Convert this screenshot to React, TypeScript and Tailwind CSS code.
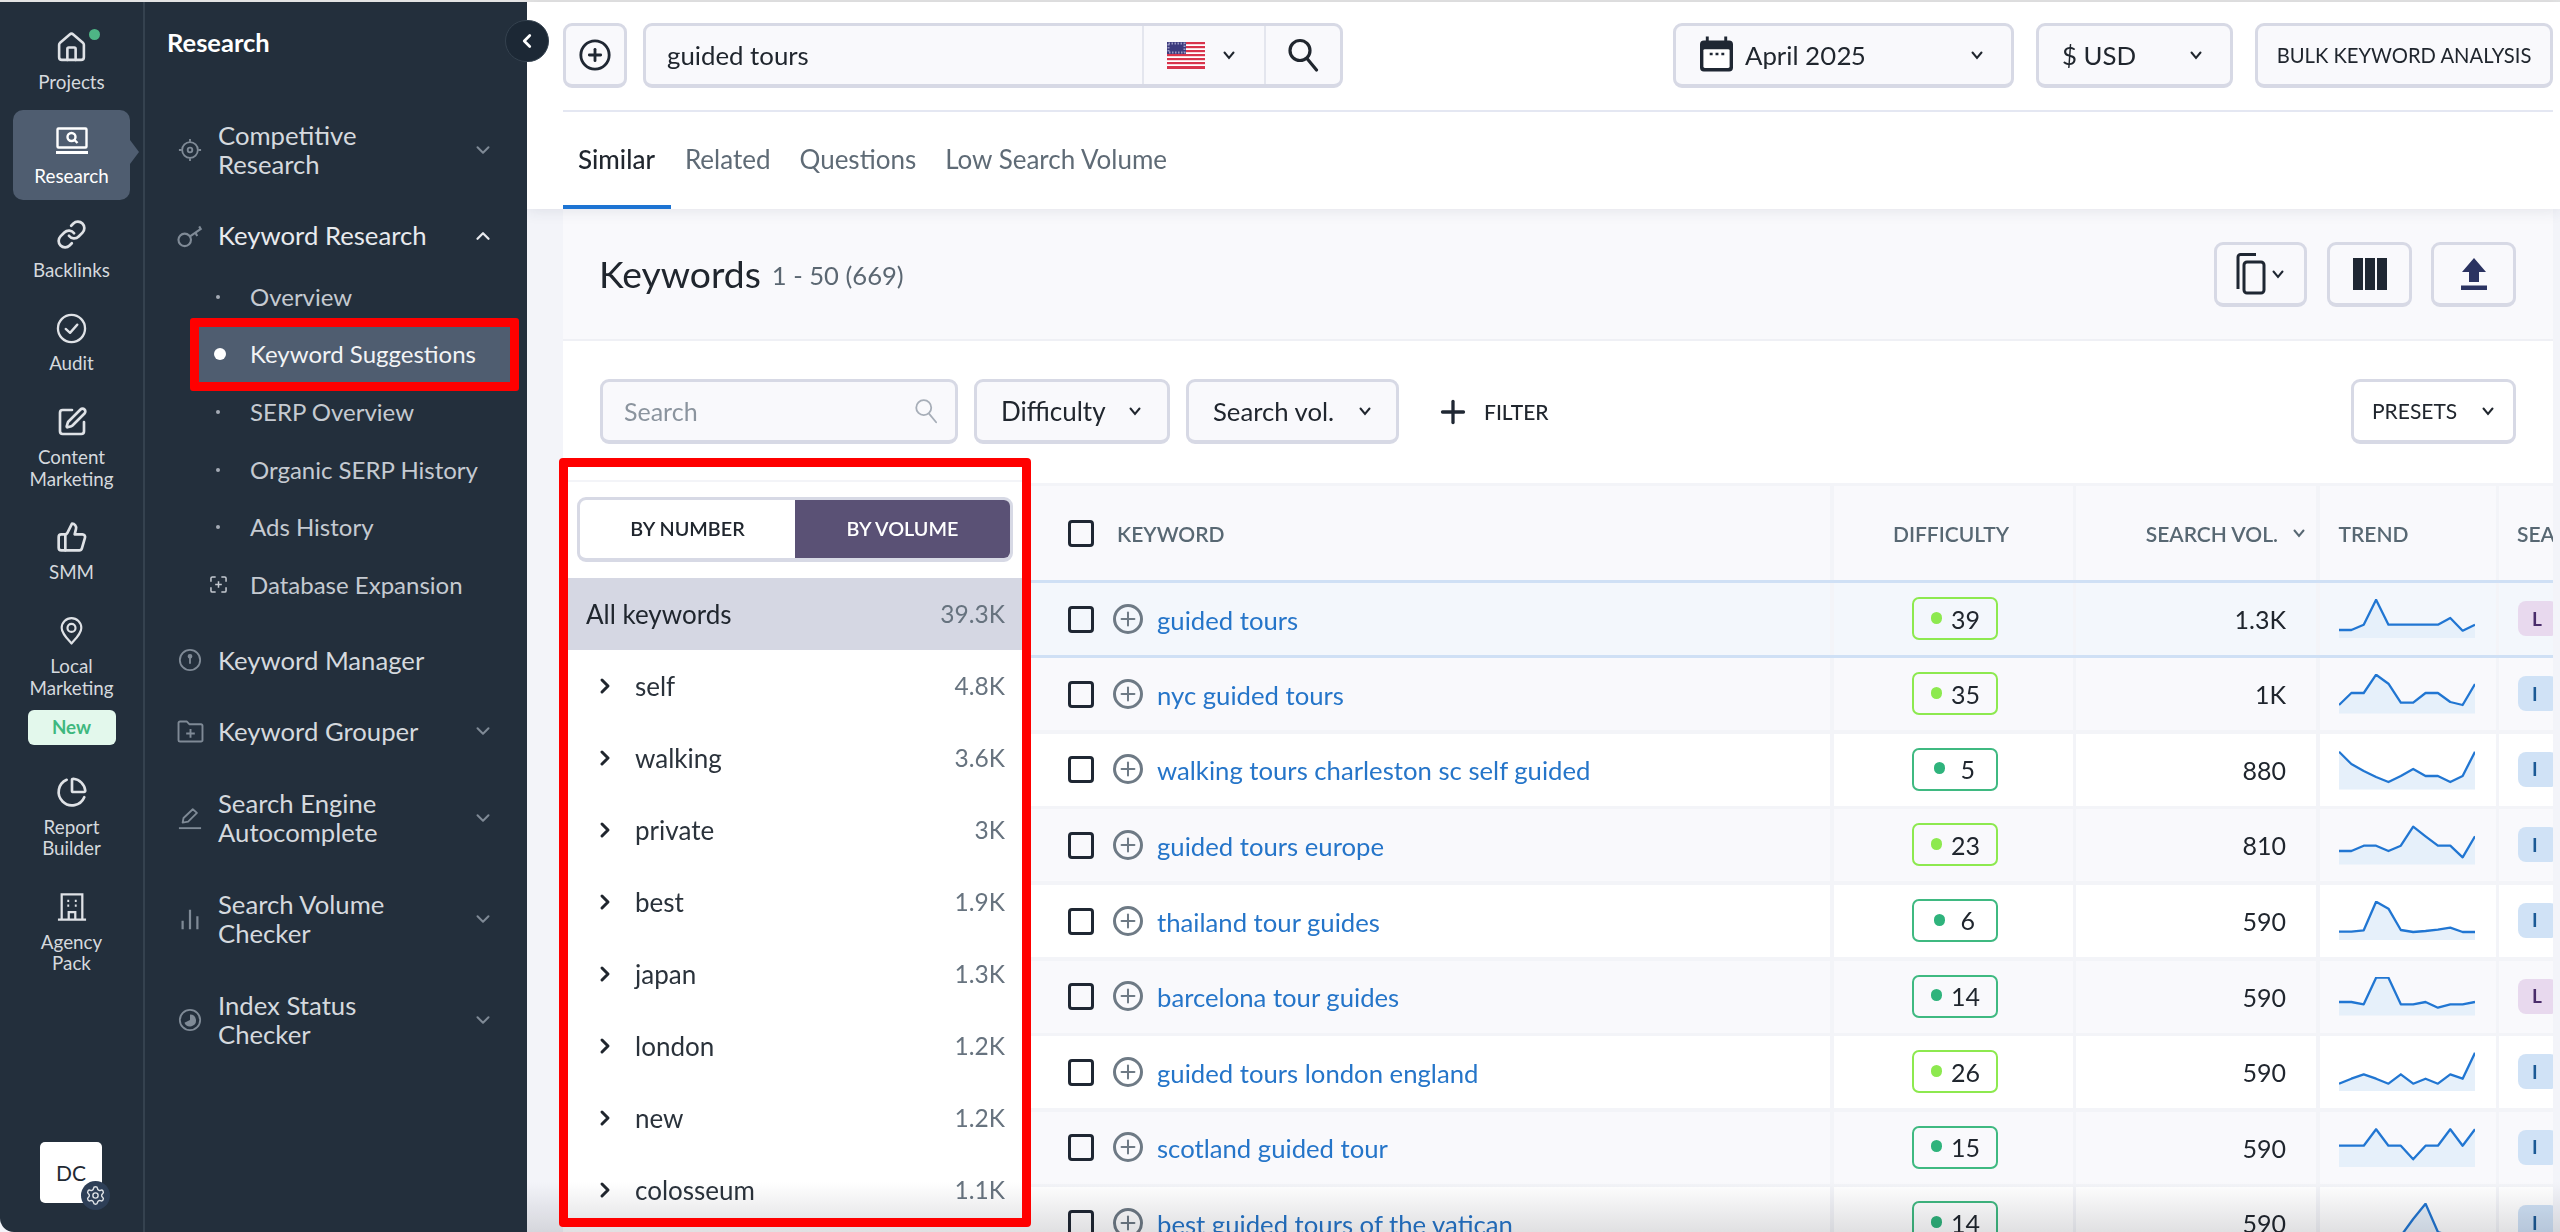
import { ReactNode } from "react";
import { ChevronDown, ChevronUp, ChevronLeft, ChevronRight, Plus, Settings, Home, Link, SquarePen, ThumbsUp, PieChart, CirclePlus } from "lucide-react";

const inputBtn = "border-[3px] border-b-4 border-[#d7d9e5] rounded-[9px] bg-[#f9f9fc]";

function V({ className = "" }: { className?: string }) {
  return (
    <svg viewBox="0 0 14 14" className={`w-[14px] h-[14px] ${className}`} fill="none" stroke="currentColor" strokeWidth="2" strokeLinecap="round">
      <path d="M2.5 4.5 7 10l4.5-5.5" />
    </svg>
  );
}

function Magnifier({ className = "", color, width }: { className?: string; color: string; width: number }) {
  return (
    <svg viewBox="0 0 32 34" className={className} fill="none" stroke={color} strokeWidth={width} strokeLinecap="round">
      <circle cx="13" cy="12.500" r="10" />
      <path d="m20 20.500 9.500 11.500" />
    </svg>
  );
}

function ResearchIcon() {
  return (
    <svg viewBox="0 0 34 28" className="w-[34px] h-[28px]" fill="none" stroke="#fff" strokeWidth="2.4">
      <rect x="2.5" y="1.5" width="29" height="19" rx="1" />
      <circle cx="16.5" cy="10" r="4" />
      <path d="m19.5 13 3 3" />
      <path d="M1 25.5h32" strokeWidth="3" />
    </svg>
  );
}

function PinIcon() {
  return (
    <svg viewBox="0 0 28 32" className="w-[25px] h-[30px]" fill="none" stroke="#dfe2e6" strokeWidth="2.4" strokeLinejoin="round">
      <path d="M14 30C8 23 3 18 3 12.5a11 11 0 0 1 22 0C25 18 20 23 14 30Z" />
      <circle cx="14" cy="12.5" r="4.5" />
    </svg>
  );
}

function BuildingIcon() {
  return (
    <svg viewBox="0 0 32 32" className="w-[30px] h-[31px]" fill="none" stroke="#dfe2e6" strokeWidth="2.4">
      <path d="M5 30V3h22v27M1 30h30" />
      <path d="M12.5 30v-8h7v8" />
      <path d="M11 10h2M19 10h2M11 15h2M19 15h2" />
    </svg>
  );
}

const railItems: { label: string[]; icon: ReactNode; active?: boolean; badge?: boolean; dot?: boolean }[] = [
  { label: ["Projects"], icon: <Home className="w-[33px] h-[33px]" strokeWidth={1.9} color="#dfe2e6" />, dot: true },
  { label: ["Research"], icon: <ResearchIcon />, active: true },
  { label: ["Backlinks"], icon: <Link className="w-[31px] h-[31px]" strokeWidth={2.1} color="#dfe2e6" /> },
  { label: ["Audit"], icon: <svg viewBox="0 0 32 32" className="w-[31px] h-[31px]" fill="none" stroke="#dfe2e6" strokeWidth="2.4" strokeLinecap="round" strokeLinejoin="round"><circle cx="16" cy="16" r="14" /><path d="m10 16.500 4.500 4L22 12" /></svg> },
  { label: ["Content", "Marketing"], icon: <SquarePen className="w-[32px] h-[32px]" strokeWidth={2} color="#dfe2e6" /> },
  { label: ["SMM"], icon: <ThumbsUp className="w-[32px] h-[32px]" strokeWidth={2} color="#dfe2e6" /> },
  { label: ["Local", "Marketing"], icon: <PinIcon />, badge: true },
  { label: ["Report", "Builder"], icon: <PieChart className="w-[32px] h-[32px]" strokeWidth={2} color="#dfe2e6" /> },
  { label: ["Agency", "Pack"], icon: <BuildingIcon /> },
];

function Rail() {
  return (
    <div className="w-[145px] shrink-0 border-r-2 border-[#35424f] flex flex-col items-center pt-[29px] gap-[32.300px] relative">
      {railItems.map((it) => (
        <div
          key={it.label[0]}
          className={`relative flex flex-col items-center w-[117px] ${it.active ? "bg-[#4f5d70] rounded-[10px] pt-[15px] pb-[14px] -mt-[15px] -mb-[14px]" : ""}`}
        >
          <div className="h-[32px] flex items-center justify-center relative">
            {it.icon}
            {it.dot && <span className="absolute -right-[12px] -top-[2px] w-[11px] h-[11px] rounded-full bg-[#4eb585]" />}
          </div>
          <div className={`mt-[8px] text-[18.800px] leading-[21.500px] text-center ${it.active ? "text-white" : "text-[#d5d9de]"}`}>
            {it.label.map((l) => <div key={l}>{l}</div>)}
          </div>
          {it.badge && <div className="mt-[11.500px] -mb-[1.500px] w-[88px] h-[35px] rounded-[6px] bg-[#e3f8ec] text-[#3fb87f] text-[18.800px] font-bold flex items-center justify-center">New</div>}
          {it.active && <span className="absolute -right-[9px] top-[30px] w-0 h-0 border-y-[12px] border-y-transparent border-l-[9px] border-l-[#4f5d70]" />}
        </div>
      ))}
      <div className="absolute left-[40px] top-[1140px] w-[62px] h-[61px] rounded-[5px] bg-white text-[#1f2933] text-[21px] flex items-center justify-center">DC
        <span className="absolute -right-[8px] -bottom-[7px] w-[29px] h-[29px] rounded-full bg-[#2e3f57] flex items-center justify-center">
          <Settings className="w-[21px] h-[21px]" strokeWidth={1.6} color="#dfe2e6" />
        </span>
      </div>
    </div>
  );
}

const gray = "#7f8a96";
const menuIcons: Record<string, ReactNode> = {
  target: <svg viewBox="0 0 26 26" className="w-[24px] h-[24px]" fill="none" stroke={gray} strokeWidth="2"><circle cx="13" cy="13" r="8.500" /><circle cx="13" cy="13" r="2.500" /><path d="M13 1v3M13 22v3M1 13h3M22 13h3" /></svg>,
  key: <svg viewBox="0 0 28 24" className="w-[27px] h-[24px]" fill="none" stroke={gray} strokeWidth="2.200"><circle cx="8" cy="16" r="6.500" /><path d="m13.500 12.500 12-8.500M19 8.500l2 3.500M23 2l2 3.500" /></svg>,
  info: <svg viewBox="0 0 26 26" className="w-[24px] h-[24px]" fill="none" stroke={gray} strokeWidth="2"><circle cx="13" cy="13" r="11" /><path d="M13 9v8" /><circle cx="13" cy="9" r="1.600" fill={gray} /></svg>,
  folder: <svg viewBox="0 0 28 24" className="w-[27px] h-[23px]" fill="none" stroke={gray} strokeWidth="2" strokeLinejoin="round"><path d="M1.500 3a1.500 1.500 0 0 1 1.500-1.500h7l3 3h12A1.500 1.500 0 0 1 26.500 6v15a1.500 1.500 0 0 1-1.500 1.500H3A1.500 1.500 0 0 1 1.500 21Z" /><path d="M14 9.500v9M9.500 14h9" /></svg>,
  pen: <svg viewBox="0 0 26 26" className="w-[24px] h-[24px]" fill="none" stroke={gray} strokeWidth="2" strokeLinejoin="round"><path d="m5 18 1-5L16 3.500l4.500 4L11 17Z" /><path d="M1 24h24" /></svg>,
  bars: <svg viewBox="0 0 26 26" className="w-[24px] h-[24px]" fill="none" stroke={gray} strokeWidth="2.400"><path d="M5 24v-9M13 24V3M21 24V10" /></svg>,
  pie: <svg viewBox="0 0 26 26" className="w-[24px] h-[24px]" fill="none" stroke={gray} strokeWidth="2"><circle cx="13" cy="13" r="11" /><path d="M13 7a6.500 6.500 0 1 1-6 9l6-3Z" fill={gray} stroke="none" /></svg>,
};

function MenuRow({ icon, lines, open, bright, top }: { icon: string; lines: string[]; open?: boolean; bright?: boolean; top: number }) {
  return (
    <div className="flex items-center pl-[27px] pr-[33px]" style={{ marginTop: top }}>
      <span className="w-[48px] -ml-[2px] pr-[8px] flex items-center justify-center shrink-0">{menuIcons[icon]}</span>
      <div className={`flex-1 text-[25.700px] leading-[29px] ${bright ? "text-[#e8eaee]" : "text-[#d5d9de]"}`}>
        {lines.map((l) => <div key={l}>{l}</div>)}
      </div>
      {open === undefined ? null : open ? <ChevronUp className="w-[22px] h-[22px]" color="#e8eaee" strokeWidth={2.5} /> : <ChevronDown className="w-[22px] h-[22px]" color="#7f8a96" strokeWidth={2.2} />}
    </div>
  );
}

const subItems = ["Overview", "Keyword Suggestions", "SERP Overview", "Organic SERP History", "Ads History", "Database Expansion"];

function SubMenu() {
  return (
    <div className="mt-[18px]">
      {subItems.map((s) => {
        if (s === "Keyword Suggestions") {
          return (
            <div key={s} className="h-[73px] -my-[7.700px] ml-[45px] w-[329px] border-[9px] border-[#ff0000] rounded-[3px] relative">
              <div className="h-full bg-[#4f5d70] flex items-center pl-[51px] text-[24px] text-[#f2f3f5]">
                <span className="absolute left-[15px] top-[21px] w-[12px] h-[12px] rounded-full bg-white" />
                {s}
              </div>
            </div>
          );
        }
        return (
          <div key={s} className="h-[57.600px] flex items-center pl-[105px] text-[24px] text-[#c5cad1] relative">
            {s === "Database Expansion" ? (
              <svg viewBox="0 0 18 18" className="absolute left-[65px] top-[20px] w-[17px] h-[17px]" fill="none" stroke="#c5cad1" strokeWidth="1.600"><path d="M1 6V2.500A1.500 1.500 0 0 1 2.500 1H6M12 1h3.500A1.500 1.500 0 0 1 17 2.500V6M17 12v3.500a1.500 1.500 0 0 1-1.500 1.500H12M6 17H2.500A1.500 1.500 0 0 1 1 15.500V12M9 5.500v7M5.500 9h7" /></svg>
            ) : (
              <span className="absolute left-[71px] top-[27px] w-[4px] h-[4px] rounded-full bg-[#a4abb5]" />
            )}
            {s}
          </div>
        );
      })}
    </div>
  );
}

function Panel() {
  return (
    <div className="w-[382px] shrink-0 flex flex-col">
      <div className="pl-[22px] pt-[24.500px] text-[25.500px] leading-[30px] font-bold text-white">Research</div>
      <MenuRow icon="target" lines={["Competitive", "Research"]} open={false} top={64} />
      <MenuRow icon="key" lines={["Keyword Research"]} open bright top={42.500} />
      <SubMenu />
      <MenuRow icon="info" lines={["Keyword Manager"]} top={32} />
      <MenuRow icon="folder" lines={["Keyword Grouper"]} open={false} top={42} />
      <MenuRow icon="pen" lines={["Search Engine", "Autocomplete"]} open={false} top={43.500} />
      <MenuRow icon="bars" lines={["Search Volume", "Checker"]} open={false} top={42.500} />
      <MenuRow icon="pie" lines={["Index Status", "Checker"]} open={false} top={43} />
    </div>
  );
}

function Flag() {
  const stripes = [0, 1, 2, 3, 4, 5, 6];
  return (
    <svg viewBox="0 0 38 27" className="w-[38px] h-[27px]">
      <rect width="38" height="27" rx="3" fill="#fff" />
      {stripes.map((i) => <rect key={i} y={i * 4} width="38" height="2.200" fill="#d8344c" />)}
      <rect y="25" width="38" height="2" fill="#d8344c" />
      <rect width="19" height="12" fill="#3c3b7e" />
      <rect x="1.500" y="1.500" width="16" height="9" fill="none" stroke="#9a9ac2" strokeWidth="2" strokeDasharray="1.500 1.500" />
    </svg>
  );
}

function TopBar() {
  return (
    <div className="relative z-[5] bg-white shadow-[0_2px_14px_rgba(40,50,80,0.10)]">
      <div className="ml-[36px] mr-[7px] h-[87px] flex pt-[21px] border-b-2 border-[#e4e7f2] box-content">
        <div className="flex w-full h-[65px]">
          <div className={`${inputBtn} w-[64px] flex items-center justify-center`}>
            <CirclePlus className="w-[34px] h-[34px]" strokeWidth={2} color="#1f2733" />
          </div>
          <div className={`${inputBtn} ml-[16px] w-[700px] flex items-stretch`}>
            <div className="w-[498px] pl-[21px] pt-[1px] text-[25.800px] text-[#20262e] flex items-center border-r-2 border-[#e4e6ee]">guided tours</div>
            <div className="w-[122px] flex items-center pl-[23px] border-r-2 border-[#e4e6ee]">
              <Flag />
              <V className="ml-[17px] text-[#20262e]" />
            </div>
            <div className="flex-1 flex items-center justify-center"><Magnifier className="w-[32px] h-[34px]" color="#20262e" width={3.2} /></div>
          </div>
          <div className={`${inputBtn} ml-auto w-[341px] flex items-center pl-[24px] pr-[27px] text-[25.800px] text-[#20262e] proportional-nums`}>
            <svg viewBox="0 0 34 36" className="w-[33px] h-[36px] -mt-[2px]" fill="none"><path d="M6 0h3v4h16V0h3v4h2a4 4 0 0 1 4 4v24a4 4 0 0 1-4 4H4a4 4 0 0 1-4-4V8a4 4 0 0 1 4-4h2Z" fill="#1f2733" /><rect x="3.500" y="13" width="27" height="19.500" rx="1.500" fill="#fff" /><path d="M10 18h3M16 18h3M22 18h3" stroke="#1f2733" strokeWidth="2.500" /></svg>
            <span className="ml-[12px] pt-[1px]">April 2025</span>
            <V className="ml-auto text-[#20262e]" />
          </div>
          <div className={`${inputBtn} ml-[22px] w-[197px] flex items-center pl-[23px] pr-[27px] text-[25.800px] text-[#20262e]`}>
            <span>$ USD</span>
            <V className="ml-auto text-[#20262e]" />
          </div>
          <div className={`${inputBtn} ml-[22px] w-[298px] flex items-center justify-center text-[20.200px] text-[#20262e]`}>BULK KEYWORD ANALYSIS</div>
        </div>
      </div>
      <div className="ml-[36px] h-[98px] flex items-center text-[26px] relative -mt-[1px] pb-[1px]">
        {["Similar", "Related", "Questions", "Low Search Volume"].map((t, i) => (
          <div key={t} className={`${i === 0 ? "pl-[15px] pr-[1px] font-medium text-[#20262e]" : "pl-[29px] text-[#5f6b76]"}`}>{t}</div>
        ))}
        <span className="absolute left-0 bottom-0 w-[108px] h-[4px] bg-[#1d74d3]" />
      </div>
    </div>
  );
}

const leftRows = [
  ["self", "4.8K"], ["walking", "3.6K"], ["private", "3K"], ["best", "1.9K"],
  ["japan", "1.3K"], ["london", "1.2K"], ["new", "1.2K"], ["colosseum", "1.1K"],
];

function LeftBox() {
  return (
    <div className="relative -ml-[4px] w-[472px] h-[769px] shrink-0">
      <div className="absolute inset-[9px] bg-white">
        <div className="h-[15px] border-b-2 border-[#f3f4f8]" />
        <div className="mx-[9px] mt-[15px] h-[65px] border-[3px] border-b-4 border-[#d7d9e5] rounded-[9px] flex text-[19.800px] font-semibold">
          <div className="w-[215px] flex items-center justify-center text-[#20262e]">BY NUMBER</div>
          <div className="flex-1 bg-[#5a5175] rounded-r-[6px] flex items-center justify-center text-white">BY VOLUME</div>
        </div>
        <div className="mt-[16px] h-[72px] bg-[#d5d7e3] flex items-center justify-between pl-[18px] pr-[17px] text-[26px]">
          <span className="text-[#20262e]">All keywords</span>
          <span className="text-[#67737f] text-[24.500px]">39.3K</span>
        </div>
        {leftRows.map(([name, val]) => (
          <div key={name} className="h-[72px] flex items-center pl-[25px] pr-[17px] text-[26px]">
            <ChevronRight className="w-[24px] h-[24px]" strokeWidth={3} color="#20262e" />
            <span className="ml-[18px] text-[#2a323b]">{name}</span>
            <span className="ml-auto text-[#67737f] text-[24.500px]">{val}</span>
          </div>
        ))}
      </div>
      <div className="absolute inset-0 z-[30] border-[9px] border-[#ff0000] rounded-[4px] pointer-events-none" />
    </div>
  );
}

const cols = "grid grid-cols-[799px_239px_240px_176px_1fr] gap-x-[3.500px]";
const rows = [
  { k: "guided tours", d: 39, v: "1.3K", t: "L", s: [31, 31, 25.7, 0.7, 25.7, 25.7, 25.7, 25.7, 25.7, 19, 31.7, 25.7], b: 39 },
  { k: "nyc guided tours", d: 35, v: "1K", t: "I", s: [31, 19, 19, 0.7, 9.7, 28.7, 28.7, 19, 19, 28, 31, 10], b: 39.5 },
  { k: "walking tours charleston sc self guided", d: 5, v: "880", t: "I", s: [1.7, 14, 21, 27, 32, 26, 19, 26, 26, 32, 26, 1.7], b: 39.5 },
  { k: "guided tours europe", d: 23, v: "810", t: "I", s: [26, 26, 20.7, 20.7, 26, 20.7, 1.7, 11.3, 20.7, 20.7, 32.3, 11.3], b: 39.5 },
  { k: "thailand tour guides", d: 6, v: "590", t: "I", s: [30.7, 30.7, 29.3, 0.7, 7.7, 29, 31, 30, 28.7, 26.7, 31, 31], b: 39 },
  { k: "barcelona tour guides", d: 14, v: "590", t: "L", s: [25, 25, 27.3, 0.7, 0.7, 27.3, 27.3, 25, 30.7, 27.3, 27.3, 25], b: 38.5 },
  { k: "guided tours london england", d: 26, v: "590", t: "I", s: [31.7, 26.7, 22.3, 26.7, 31.7, 22.3, 31.7, 26.7, 31.7, 22.3, 26.7, 0.7], b: 39 },
  { k: "scotland guided tour", d: 15, v: "590", t: "I", s: [17.7, 17.7, 17.7, 1.3, 17.7, 17.7, 31.3, 17.7, 17.7, 1.3, 17.7, 1.3], b: 39 },
  { k: "best guided tours of the vatican", d: 14, v: "590", t: "I", s: [33, 33, 33, 33, 33, 33, 16, 0.7, 29, 33, 33, 33], b: 39 },
];

function Spark({ s, b }: { s: number[]; b: number }) {
  const pts = s.map((y, i) => `${(i * 136) / 11},${y}`).join(" ");
  return (
    <svg viewBox="0 0 136 40" className="w-[136px] h-[40px]">
      <polygon points={`0,${b} ${pts} 136,${b}`} fill="#e6f0fa" />
      <polyline points={pts} fill="none" stroke="#2176d2" strokeWidth="2.300" strokeLinejoin="round" />
    </svg>
  );
}

function Row({ r, bg }: { r: (typeof rows)[number]; bg: string }) {
  const light = r.d > 20;
  return (
    <div className={`${cols} h-[72px]`}>
      <div className={`${bg} flex items-center pl-[37px]`}>
        <span className="w-[26px] h-[27px] border-[3px] border-[#1f2733] rounded-[4px]" />
        <span className="ml-[19px] w-[30px] h-[30px] rounded-full border-[3px] border-[#6e7a85] flex items-center justify-center -mt-[1px]">
          <Plus className="w-[22px] h-[22px]" color="#6e7a85" strokeWidth={2.2} />
        </span>
        <span className="ml-[14px] pt-[1.500px] text-[25.700px] text-[#2575c9]">{r.k}</span>
      </div>
      <div className={`${bg} flex items-center pl-[78.500px]`}>
        <div className={`w-[86px] h-[43px] -mt-[1px] rounded-[7px] border-2 ${light ? "border-[#8de94f]" : "border-[#3fb981]"} flex items-center justify-end text-[25px] text-[#20262e] ${r.d < 10 ? "pr-[21px]" : "pr-[16px]"}`}>
          <span className={`w-[11px] h-[12px] rounded-full ${light ? "bg-[#8de94f]" : "bg-[#2fb37c]"} ${r.d < 10 ? "mr-[15px]" : "mr-[9px]"} -mt-[2px]`} />
          <span className="pt-[1px]">{r.d}</span>
        </div>
      </div>
      <div className={`${bg} flex items-center justify-end pr-[30px] pt-[1.500px] text-[25px] text-[#20262e]`}>{r.v}</div>
      <div className={`${bg} flex items-center pl-[19.500px]`}><Spark s={r.s} b={r.b} /></div>
      <div className={`${bg} flex items-center pl-[19px] overflow-hidden`}>
        <span className={`w-[40px] shrink-0 h-[35px] rounded-[8px] -mt-[1px] flex items-center justify-start pl-[14px] text-[19px] font-bold ${r.t === "L" ? "bg-[#e8d9ee] text-[#4a2d6b]" : "bg-[#d0e2f6] text-[#1c5a96]"}`}>{r.t}</span>
      </div>
    </div>
  );
}

function KeywordTable() {
  const head = "bg-[#f9f9fc] flex items-center text-[21px] font-semibold text-[#586873]";
  return (
    <div className="flex-1 mt-[25px] bg-[#f3f4f8] pt-[3.300px] overflow-hidden">
      <div className={`${cols} h-[94px]`}>
        <div className={`${head} pl-[37px]`}>
          <span className="w-[26px] h-[27px] border-[3px] border-[#1f2733] rounded-[4px]" />
          <span className="ml-[23px]">KEYWORD</span>
        </div>
        <div className={`${head} justify-center pr-[4px]`}>DIFFICULTY</div>
        <div className={`${head} justify-end pr-[10px]`}>SEARCH VOL.<V className="ml-[14px] w-[12px] h-[12px]" /></div>
        <div className={`${head} pl-[19px]`}>TREND</div>
        <div className={`${head} pl-[18px] overflow-hidden whitespace-nowrap`}>SEARCH</div>
      </div>
      <div className="border-y-[3.600px] border-[#cfe0f5]">
        <Row r={rows[0]} bg="bg-[#f3f7fc]" />
      </div>
      {rows.slice(1).map((r, i) => (
        <div key={r.k} className={i === 0 ? "" : "mt-[3.600px]"}>
          <Row r={r} bg={i % 2 === 0 ? "bg-[#f9f9fc]" : "bg-white"} />
        </div>
      ))}
    </div>
  );
}

function Content() {
  return (
    <div className="flex-1 min-h-0 ml-[36px] mr-[7px] flex flex-col">
      <div className="h-[132px] shrink-0 bg-[#f9f9fc] border-b-2 border-[#eff0f5] flex items-center pl-[36px] pr-[37px]">
        <span className="text-[37.300px] text-[#20262e]">Keywords</span>
        <span className="ml-[11px] mt-[2px] text-[25.600px] text-[#5b6772]">1 - 50 (669)</span>
        <div className={`${inputBtn} ml-auto w-[93px] h-[65px] flex items-center pl-[19px]`}>
          <svg viewBox="0 0 30 42" className="w-[30px] h-[42px]" fill="none" stroke="#1f2733" strokeWidth="3"><path d="M2 36V4a2.500 2.500 0 0 1 2.500-2.500H20" /><rect x="8" y="9" width="20" height="31" rx="3" /></svg>
          <V className="ml-[5px] text-[#1f2733]" />
        </div>
        <div className={`${inputBtn} ml-[20px] w-[85px] h-[65px] flex items-center justify-center`}>
          <svg viewBox="0 0 34 32" className="w-[34px] h-[32px]" fill="#1f2733"><rect width="10" height="32" /><rect x="12" width="10" height="32" /><rect x="24" width="10" height="32" /></svg>
        </div>
        <div className={`${inputBtn} ml-[19px] w-[85px] h-[65px] flex items-center justify-center`}>
          <svg viewBox="0 0 26 32" className="w-[26px] h-[32px]" fill="#2b3361"><path d="M13 0 25 14H18V24H8V14H1Z" /><rect y="27.500" width="26" height="4.500" /></svg>
        </div>
      </div>
      <div className="flex-1 min-h-0 bg-white flex flex-col">
        <div className="h-[117px] shrink-0 flex pt-[38px] pl-[37px] pr-[37px]">
          <div className="flex w-full h-[65px] items-stretch">
            <div className={`${inputBtn} w-[358px] flex items-center pl-[21px] pr-[17px] text-[25px] text-[#8b949e]`}>
              <span className="pt-[1px]">Search</span>
              <Magnifier className="ml-auto w-[24px] h-[26px]" color="#a7aeb8" width={2.4} />
            </div>
            <div className={`${inputBtn} ml-[16px] w-[196px] flex items-center pl-[24px] pr-[25px] text-[26px] text-[#20262e]`}>
              <span className="pt-[1px]">Difficulty</span><V className="ml-auto" />
            </div>
            <div className={`${inputBtn} ml-[16px] w-[213px] flex items-center pl-[24px] pr-[24px] text-[25.700px] text-[#20262e]`}>
              <span className="pt-[1px]">Search vol.</span><V className="ml-auto" />
            </div>
            <div className="ml-[36px] flex items-center text-[21px] font-medium text-[#20262e]">
              <Plus className="w-[36px] h-[36px]" strokeWidth={2.2} color="#1f2733" />
              <span className="ml-[13px]">FILTER</span>
            </div>
            <div className="ml-auto w-[165px] border-[3px] border-b-4 border-[#d7d9e5] rounded-[9px] flex items-center pl-[18px] pr-[18px] text-[21px] text-[#20262e]">
              <span>PRESETS</span><V className="ml-auto" />
            </div>
          </div>
        </div>
        <div className="flex-1 min-h-0 flex">
          <LeftBox />
          <KeywordTable />
        </div>
      </div>
    </div>
  );
}

export default function App() {
  return (
    <div className="w-[2560px] h-[1232px] overflow-hidden relative bg-[#f3f4f9] font-['Lato',sans-serif] flex flex-col">
      <div className="h-[2px] bg-[#e4e4e4] shrink-0" />
      <div className="flex-1 min-h-0 flex">
        <div className="w-[527px] shrink-0 bg-[#232f3c] flex rounded-bl-[14px] relative z-[40]">
          <Rail />
          <Panel />
          <button className="absolute left-[505px] top-[18px] w-[44px] h-[42px] rounded-full bg-[#1c2835] border border-[#35424f] flex items-center justify-center">
            <ChevronLeft className="w-[22px] h-[22px]" color="#fff" strokeWidth={3} />
          </button>
        </div>
        <div className="flex-1 min-w-0 flex flex-col">
          <TopBar />
          <Content />
        </div>
      </div>
      <div className="absolute left-[527px] right-0 bottom-0 h-[50px] z-[10] bg-gradient-to-b from-white to-[#e0e0e2] mix-blend-multiply pointer-events-none" />
    </div>
  );
}
